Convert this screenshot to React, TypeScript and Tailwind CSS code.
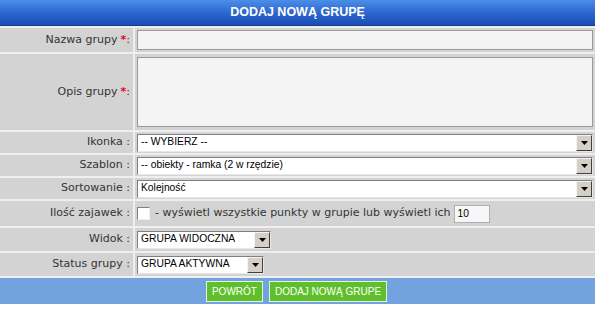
import React from "react";

function Arrow() {
  return (
    <div className="w-[16px] h-[16px] bg-[#d4d0c8] border border-t-[#f4f4f4] border-l-[#f4f4f4] border-r-[#404040] border-b-[#404040] flex items-center justify-center shrink-0">
      <svg width="7" height="4" viewBox="0 0 7 4">
        <polygon points="0,0 7,0 3.5,4" fill="#000" />
      </svg>
    </div>
  );
}

function Select({ text, w }: { text: string; w?: string }) {
  return (
    <div
      className={`h-[18px] bg-white border border-t-[#808080] border-l-[#808080] border-r-[#e8e8e8] border-b-[#e8e8e8] flex items-center pl-[3px] ${w ?? "flex-1"}`}
    >
      <span className="flex-1 text-[10.3px] text-black leading-none whitespace-nowrap overflow-hidden">{text}</span>
      <Arrow />
    </div>
  );
}

function Row({ label, req, h, children }: { label: string; req?: boolean; h: string; children: React.ReactNode }) {
  return (
    <div className={`flex gap-[2px] ${h}`}>
      <div
        className="w-[133px] shrink-0 bg-[#d3d3d3] flex items-center justify-end pr-[3px] text-[11px] text-[#333] whitespace-nowrap"
        style={{ fontFamily: '"DejaVu Sans", Verdana, sans-serif' }}
      >
        {label}
        {req && <span className="text-[#e8002a] font-bold ml-[3px]">*</span>}
        {req ? ":" : " :"}
      </div>
      <div className="flex-1 bg-[#d3d3d3] flex items-center pl-[2px] pr-[2px]">{children}</div>
    </div>
  );
}

export default function App() {
  return (
    <div className="w-[597px] h-[309px] bg-white" style={{ fontFamily: '"Liberation Sans", Arial, sans-serif' }}>
      <div className="w-[595px] flex flex-col gap-[2px] bg-[#efefef]">
        <div className="h-[26px] bg-gradient-to-b from-[#4c8ee8] via-[#2d67d0] to-[#1c4db3] flex items-center justify-center text-white font-bold text-[12.5px] border-b border-[#0f3a96]">
          DODAJ NOWĄ GRUPĘ
        </div>
        <Row label="Nazwa grupy" req h="h-[24px]">
          <div className="flex-1 h-[20px] bg-[#f4f4f4] border border-[#9a9a9a]" />
        </Row>
        <Row label="Opis grupy" req h="h-[76px]">
          <div className="flex-1 h-[70px] bg-[#f4f4f4] border border-[#9a9a9a]" />
        </Row>
        <Row label="Ikonka" h="h-[21px]">
          <Select text="-- WYBIERZ --" />
        </Row>
        <Row label="Szablon" h="h-[21px]">
          <Select text="-- obiekty - ramka (2 w rzędzie)" />
        </Row>
        <Row label="Sortowanie" h="h-[21px]">
          <Select text="Kolejność" />
        </Row>
        <Row label="Ilość zajawek" h="h-[25px]">
          <div className="flex items-center">
            <div className="w-[13px] h-[13px] bg-white border border-t-[#808080] border-l-[#808080] border-r-[#f0f0f0] border-b-[#f0f0f0]" />
            <span
              className="text-[11px] text-[#333] ml-[5px] whitespace-nowrap"
              style={{ fontFamily: '"DejaVu Sans", Verdana, sans-serif' }}
            >
              - wyświetl wszystkie punkty w grupie lub wyświetl ich
            </span>
            <div className="ml-[3px] w-[36px] h-[18px] bg-[#f7f7f7] border border-[#b0b0b0] text-[10.3px] text-black flex items-center pl-[3px]">10</div>
          </div>
        </Row>
        <Row label="Widok" h="h-[23px]">
          <Select text="GRUPA WIDOCZNA" w="w-[134px]" />
        </Row>
        <Row label="Status grupy" h="h-[23px]">
          <Select text="GRUPA AKTYWNA" w="w-[127px]" />
        </Row>
        <div className="h-[26px] bg-[#72a3df] flex items-center justify-center gap-[6px] pr-[2px]">
          <div className="h-[21px] px-[5px] bg-[#5fbf2c] border border-[#e6f5dc] text-white text-[10px] flex items-center">POWRÓT</div>
          <div className="h-[21px] px-[5px] bg-[#5fbf2c] border border-[#e6f5dc] text-white text-[10px] flex items-center">DODAJ NOWĄ GRUPE</div>
        </div>
      </div>
    </div>
  );
}
